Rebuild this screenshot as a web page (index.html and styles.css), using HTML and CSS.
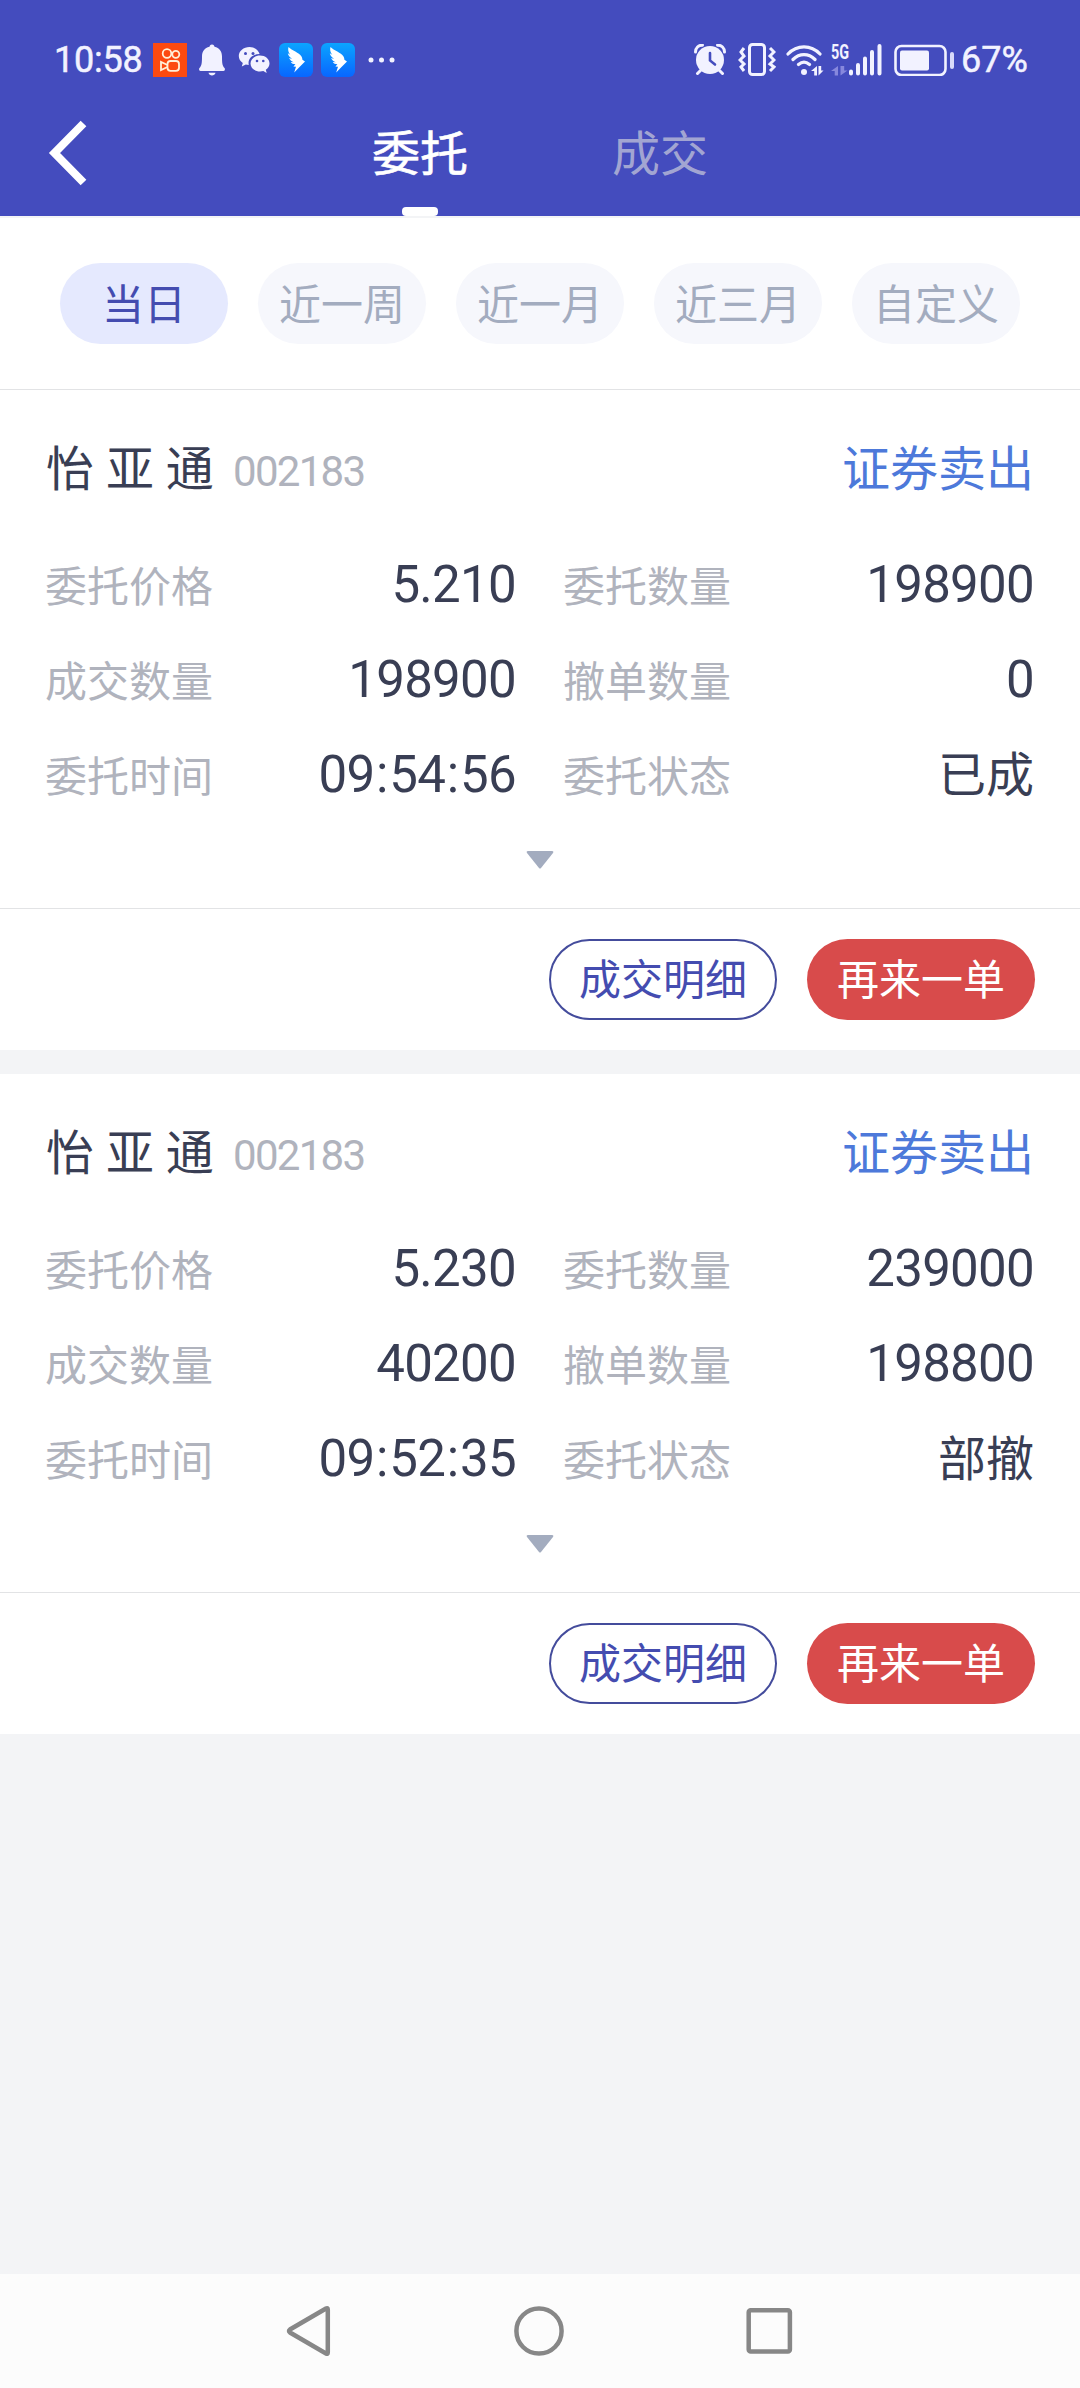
FILE: index.html
```html
<!DOCTYPE html>
<html lang="zh-CN">
<head>
<meta charset="utf-8">
<title>委托</title>
<link rel="stylesheet" href="styles.css">
</head>
<body>
<header class="header">
  <div class="status">
    <div class="status-group">
      <span class="clock">10:58</span>
      <svg class="kuai" width="34" height="34" viewBox="153 43 34 34"><path fill="#fc4a10" d="M153 43h34v34h-34z"/><g fill="none" stroke="#fff0d8" stroke-width="1.8"><circle cx="167" cy="53.5" r="4.3"/><circle cx="175.8" cy="54.3" r="3.5"/><rect x="167.500" y="61" width="11.500" height="9.800" rx="3"/><path d="M167.500 65l-6.500-3v8l6.500-3"/></g></svg>
      <svg class="bell" width="26" height="32" viewBox="199 44 26 32"><path fill="#f2f2ff" d="M212 44.500c1.700 0 2.300 1 2.500 2.300 5 1.200 7.500 4.700 7.500 9.700 0 7 .5 9.500 2.500 11.500.8 1 .5 3-1 3h-23c-1.500 0-1.800-2-1-3 2-2 2.500-4.500 2.500-11.500 0-5 2.500-8.500 7.500-9.700.2-1.300.8-2.300 2.500-2.300zM208.500 72.800h7c-.8 3.600-6.200 3.600-7 0z"/></svg>
      <svg class="wechat" width="32" height="28" viewBox="238 46 32 28"><path fill="#f2f2ff" d="M249.500 47c-6 0-10.700 4-10.700 9 0 3 1.500 5.300 4 7l-1 3.600 4-2c1 .3 2 .4 3 .5-1.500-6.600 4-11 10.800-11-1-4-5-7.100-10.100-7.100z"/><path fill="#f2f2ff" d="M260 55.500c-5.300 0-9.500 3.500-9.500 8s4.200 8 9.500 8c1.200 0 2.300-.2 3.300-.5l3.400 2-.9-3.200c2.300-1.500 3.700-3.700 3.700-6.300 0-4.500-4.200-8-9.500-8z"/><g fill="#444cbe"><circle cx="245.500" cy="53.500" r="1.500"/><circle cx="253" cy="53.500" r="1.500"/><circle cx="257" cy="61" r="1.300"/><circle cx="263.300" cy="61" r="1.300"/></g></svg>
      <svg class="wing first" width="34" height="34" viewBox="0 0 34 34"><defs><linearGradient id="sky" x2="0" y2="1"><stop stop-color="#0ba4ff"/><stop offset="1" stop-color="#0866ff"/></linearGradient></defs><rect width="34" height="34" rx="6" fill="url(#sky)"/><path id="wing" fill="#fff" d="M9.500 4C13 7.500 20 9.500 22.500 13.500c.8 1.500.8 2 .9 3.300L26 18.500 20.500 24l-5.300 5.500 1.800-5.700-2.600-.3 2-2.200c-2 0-3.800-.8-4.600-2.200l3 .1c-2.400-.8-4-2.300-4.700-4.200l3 .9c-2.500-1.600-3.900-3.400-4.300-5.600l2.500 1.500C9.300 9.300 8.700 6.600 9.500 4z"/></svg>
      <svg class="wing" width="34" height="34" viewBox="0 0 34 34"><rect width="34" height="34" rx="6" fill="url(#sky)"/><use href="#wing"/></svg>
      <svg class="more" width="27" height="6" viewBox="0 0 27 6"><g fill="#f2f2ff"><circle cx="3" cy="3" r="2.500"/><circle cx="13.500" cy="3" r="2.500"/><circle cx="24" cy="3" r="2.500"/></g></svg>
    </div>
    <div class="status-group">
      <svg width="32" height="32" viewBox="694 44 32 32"><circle cx="710" cy="60" r="14" fill="#f2f2ff"/><path d="M710 53v7.500l5 4" fill="none" stroke="#444cbe" stroke-width="2.600" stroke-linecap="round"/><path d="M695.500 52c0-4 3-7 7-6.800M724.500 52c0-4-3-7-7-6.800M700.500 70.500l-3 3M719.500 70.500l3 3" fill="none" stroke="#f2f2ff" stroke-width="3" stroke-linecap="round"/></svg>
      <svg class="vibrate" width="38" height="34" viewBox="738 44 38 34"><g fill="none" stroke="#f2f2ff" stroke-width="3"><rect x="749.500" y="45.500" width="15" height="30" rx="3"/><path d="M744 49l-3 4 3 4-4 4 4 4-3 3 3 4M770 49l4 4-4 4 4 4-4 4 4 3-4 4"/></g></svg>
      <svg class="wifi" width="38" height="32" viewBox="786 43 38 32"><g fill="none" stroke="#f2f2ff" stroke-width="3.200" stroke-linecap="round"><path d="M788 53c9-9.500 23-9.500 32 0M793 58.500c6.500-6.500 15.500-6.500 22 0M798.500 63.500c3.500-3 7.500-3 11 0"/></g><circle cx="804" cy="71" r="3" fill="#f2f2ff"/><path d="M811 70l6-5v9.500h-2.800V70zM818.500 65v9.500l5-5h-2.300V65z" fill="#f2f2ff"/></svg>
      <div class="cell"><span class="cell-type">5G</span><svg width="18" height="10" viewBox="831 65 18 10"><path d="M831 70l7-5v9.500h-3.300V70zM840.500 65v9.500l7-5h-3.300V65z" fill="#8788dd"/></svg></div>
      <svg class="bars" width="34" height="32" viewBox="848 43 34 32"><path stroke="#f2f2ff" stroke-width="4" stroke-linecap="round" d="M851 70.500v2M858 64v8.500M865 57.500v15M872 51v21.500M879.500 45v27.500"/></svg>
      <svg class="battery" width="61" height="32" viewBox="894 43 61 32"><rect x="895.500" y="45" width="50" height="29" rx="6" fill="none" stroke="#f2f2ff" stroke-width="2.600"/><rect x="900" y="49.500" width="29" height="20" rx="2" fill="#f2f2ff"/><path stroke="#d9dafa" stroke-width="4" stroke-linecap="round" d="M952 53v13"/></svg>
      <span class="percent">67%</span>
    </div>
  </div>
  <nav class="tabs">
    <svg class="back" width="40" height="66" viewBox="0 0 40 66"><path d="M35.500 3.500L6.500 33l29 29.500" fill="none" stroke="#fff" stroke-width="8"/></svg>
    <span class="tab active">委托</span>
    <span class="tab">成交</span>
  </nav>
</header>
<div class="filters">
  <span class="chip on">当日</span><span class="chip">近一周</span><span class="chip">近一月</span><span class="chip">近三月</span><span class="chip">自定义</span>
</div>
<main>
  <article class="card">
    <div class="title"><span class="name">怡 亚 通</span><span class="code">002183</span><span class="side">证券卖出</span></div>
    <div class="grid">
      <div class="field"><span class="label">委托价格</span><span class="value">5.210</span></div>
      <div class="field"><span class="label">委托数量</span><span class="value">198900</span></div>
      <div class="field"><span class="label">成交数量</span><span class="value">198900</span></div>
      <div class="field"><span class="label">撤单数量</span><span class="value">0</span></div>
      <div class="field"><span class="label">委托时间</span><span class="value">09<span class="colon">:</span>54<span class="colon">:</span>56</span></div>
      <div class="field"><span class="label">委托状态</span><span class="value zh">已成</span></div>
    </div>
    <div class="expand"><svg width="28" height="18" viewBox="0 0 28 18"><path fill="#a3acbf" d="M2 0h24q2 0 1 2L15 17q-1 1-2 0L1 2Q0 0 2 0z"/></svg></div>
    <div class="actions"><span class="btn outline">成交明细</span><span class="btn solid">再来一单</span></div>
  </article>
  <article class="card">
    <div class="title"><span class="name">怡 亚 通</span><span class="code">002183</span><span class="side">证券卖出</span></div>
    <div class="grid">
      <div class="field"><span class="label">委托价格</span><span class="value">5.230</span></div>
      <div class="field"><span class="label">委托数量</span><span class="value">239000</span></div>
      <div class="field"><span class="label">成交数量</span><span class="value">40200</span></div>
      <div class="field"><span class="label">撤单数量</span><span class="value">198800</span></div>
      <div class="field"><span class="label">委托时间</span><span class="value">09<span class="colon">:</span>52<span class="colon">:</span>35</span></div>
      <div class="field"><span class="label">委托状态</span><span class="value zh">部撤</span></div>
    </div>
    <div class="expand"><svg width="28" height="18" viewBox="0 0 28 18"><path fill="#a3acbf" d="M2 0h24q2 0 1 2L15 17q-1 1-2 0L1 2Q0 0 2 0z"/></svg></div>
    <div class="actions"><span class="btn outline">成交明细</span><span class="btn solid">再来一单</span></div>
  </article>
</main>
<footer class="navbar">
  <svg width="50" height="56" viewBox="284 2303 50 56"><path d="M326 2308.500q1.800-1 1.800 1v43q0 2-1.800 1l-36-21q-2-1.500 0-3z" fill="none" stroke="#878787" stroke-width="4.500"/></svg>
  <svg width="56" height="56" viewBox="0 0 56 56"><circle cx="28" cy="28" r="22.600" fill="none" stroke="#878787" stroke-width="4.500"/></svg>
  <svg width="50" height="56" viewBox="744 2303 50 56"><rect x="748.700" y="2310.300" width="41.200" height="41.200" rx="2" fill="none" stroke="#878787" stroke-width="4.500"/></svg>
</footer>
</body>
</html>
```
FILE: styles.css
```css
* { box-sizing: border-box; }
body {
  margin: 0;
  width: 1080px;
  height: 2388px;
  display: flex;
  flex-direction: column;
  background: #f3f4f6;
  font-family: Roboto, "Noto Sans CJK SC", sans-serif;
  color: #393e54;
  overflow: hidden;
}
svg { display: block; flex: none; }
span { white-space: nowrap; }

.header { height: 216px; background: #444cbe; flex: none; }
.status {
  height: 120px;
  padding: 0 48px 0 54px;
  display: flex;
  justify-content: space-between;
  color: #f2f2ff;
}
.status-group { display: flex; align-items: center; }
.clock, .percent { font-size: 36px; font-weight: 400; line-height: 40px; -webkit-text-stroke: 0.5px #f2f2ff; }
.clock { width: 99px; letter-spacing: -0.2px; }
.percent { width: 71px; margin-left: 6px; letter-spacing: 0; }
.bell { margin-left: 12px; }
.wechat { margin-left: 13px; }
.wing { margin-left: 8px; }
.wing.first { margin-left: 9px; }
.more { margin-left: 13px; }
.vibrate { margin-left: 12px; }
.wifi { margin-left: 10px; }
.cell {
  width: 18px;
  height: 32px;
  margin-left: 7px;
  display: flex;
  flex-direction: column;
  justify-content: space-between;
}
.cell-type { font: 700 20px/16px Roboto, sans-serif; letter-spacing: 0; transform: scaleX(0.72); transform-origin: left; }
.bars { margin-left: -1px; }
.battery { margin-left: 12px; }

.tabs { height: 96px; display: flex; padding-left: 48px; }
.tab {
  width: 240px;
  height: 96px;
  font-size: 48px;
  line-height: 70px;
  text-align: center;
  color: #a2a5d2;
}
.tab.active {
  margin-left: 212px;
  color: #fff;
  -webkit-text-stroke: 0.6px #fff;
  display: flex;
  flex-direction: column;
  justify-content: space-between;
  align-items: center;
}
.tab.active::after { content: ""; width: 36px; height: 9px; border-radius: 4px; background: #fff; }

.filters {
  height: 174px;
  flex: none;
  border-top: 2px solid #f3f4f6;
  border-bottom: 1px solid #e2e3e5;
  background: #fff;
  padding: 45px 60px 0;
  display: flex;
  justify-content: space-between;
}
.chip {
  width: 168px;
  height: 81px;
  border-radius: 41px;
  background: #f6f7fc;
  color: #a3acbf;
  font-size: 42px;
  line-height: 85px;
  text-align: center;
}
.chip.on { background: #e5e9fe; color: #444cb0; }

main { flex: 1; display: flex; flex-direction: column; gap: 24px; }
.card { height: 660px; background: #fff; }
.title { height: 149px; padding: 42px 46px 0; display: flex; line-height: 76px; font-size: 48px; }
.name { width: 187px; }
.code { font-size: 42px; line-height: 79px; letter-spacing: -1.7px; color: #b0b3bd; }
.side { margin-left: auto; color: #4d79da; }
.grid {
  padding: 0 46px 0 45px;
  display: grid;
  grid-template-columns: 471px 471px;
  column-gap: 47px;
  grid-auto-rows: 95px;
}
.field { display: flex; justify-content: space-between; line-height: 97px; }
.label { font-size: 42px; color: #b0b3bd; }
.value { font-size: 51px; letter-spacing: -0.7px; line-height: 91px; }
.value.zh { font-size: 48px; letter-spacing: 0; line-height: 94px; }
.colon { padding: 0 1.6px; }
.expand { height: 84px; padding-top: 27px; display: flex; justify-content: center; }
.actions {
  height: 142px;
  border-top: 1px solid #e2e3e5;
  padding: 30px 45px 0;
  display: flex;
  justify-content: flex-end;
  gap: 30px;
}
.btn { width: 228px; height: 81px; border-radius: 41px; font-size: 42px; line-height: 84px; text-align: center; }
.outline { border: 2px solid #444c9c; color: #444cb0; line-height: 80px; }
.solid { background: #d84b4b; color: #fff; }

.navbar {
  height: 114px;
  flex: none;
  background: #fcfcfc;
  padding: 0 286px 0 284px;
  display: flex;
  justify-content: space-between;
  align-items: center;
}
```
